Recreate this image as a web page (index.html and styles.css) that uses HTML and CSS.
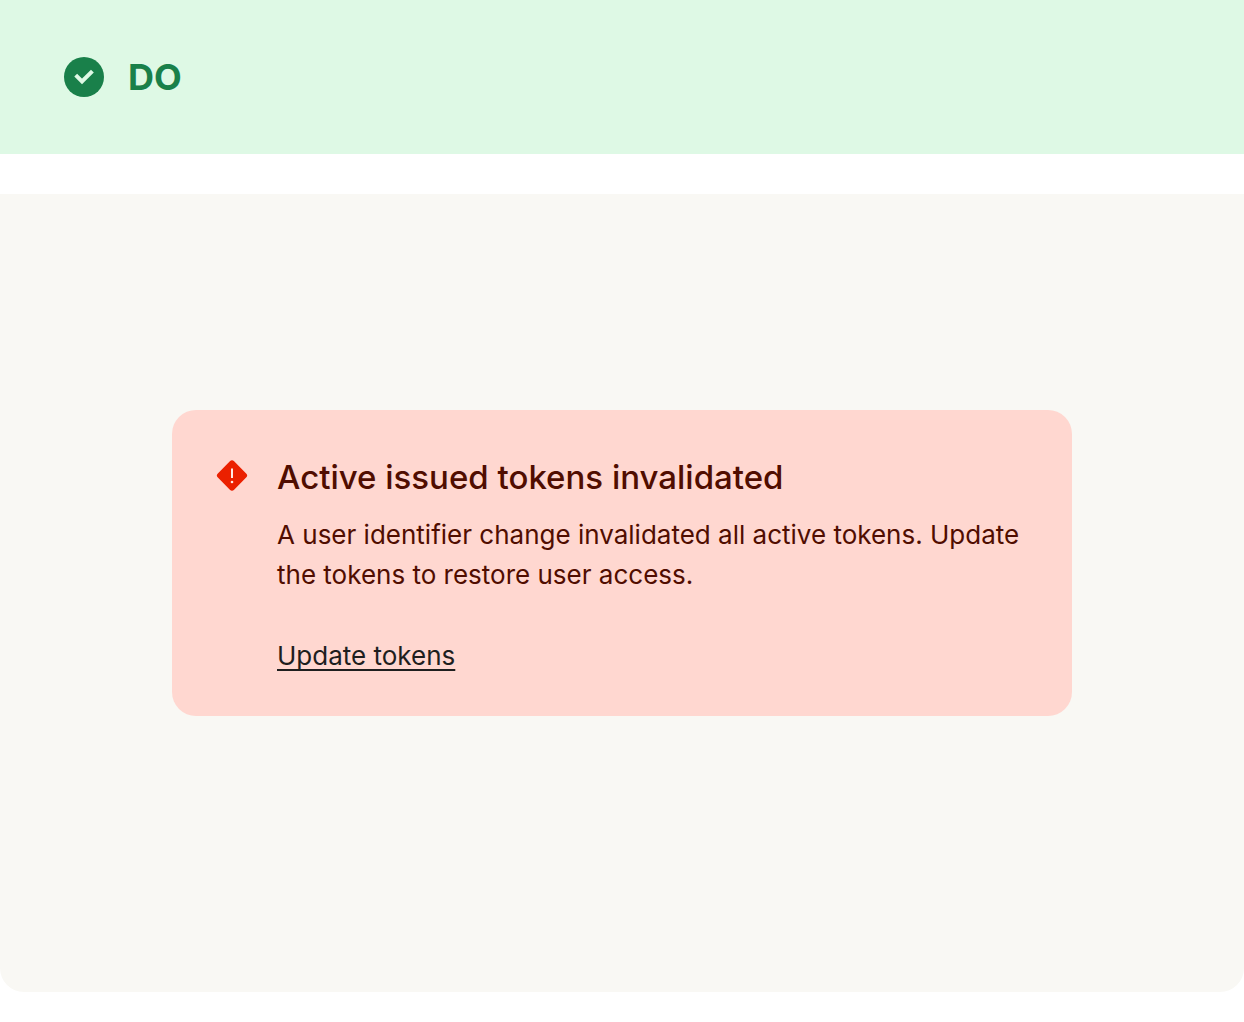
FILE: index.html
```html
<!DOCTYPE html>
<html lang="en">
<head>
  <meta charset="UTF-8">
  <title>Alert guidelines</title>
  <link rel="stylesheet" href="styles.css">
</head>
<body>
  <header class="banner">
    <svg class="banner-icon" viewBox="0 0 40 40" aria-hidden="true">
      <circle cx="20" cy="20" r="20" fill="#19804a"/>
      <path d="M11.700 18.200L18 24.500L28.400 14.100" fill="none" stroke="#def9e5" stroke-width="4"/>
    </svg>
    <h1 class="banner-title">DO</h1>
  </header>

  <main class="example">
    <section class="alert" role="alert">
      <svg class="alert-icon" viewBox="0 0 32 35" aria-hidden="true">
        <rect x="4.500" y="6" width="23" height="23" rx="3" transform="rotate(45 16 17.500)" fill="#eb2000"/>
        <path d="M16 10.500v9.500" stroke="#ffe9e4" stroke-width="2"/>
        <circle cx="16" cy="24" r="1.300" fill="#ffe9e4"/>
      </svg>
      <div class="alert-body">
        <h2 class="alert-title">Active issued tokens invalidated</h2>
        <p class="alert-text">A user identifier change invalidated all active tokens. Update the tokens to restore user access.</p>
        <a class="alert-link" href="#">Update tokens</a>
      </div>
    </section>
  </main>
</body>
</html>
```
FILE: styles.css
```css
body {
  margin: 0;
  background: #fff;
  font-family: Inter, "Liberation Sans", sans-serif;
}

.banner {
  display: flex;
  align-items: center;
  gap: 24px;
  padding: 55px 64px;
  background: #def9e5;
  color: #19804a;
}

.banner-icon {
  width: 40px;
  height: 40px;
}

.banner-title {
  margin: 0;
  font-size: 36px;
  line-height: 44px;
  font-weight: 700;
}

.example {
  margin-top: 40px;
  padding: 216px 172px 276px;
  background: #f9f8f4;
  border-radius: 0 0 24px 24px;
}

.alert {
  display: flex;
  gap: 29px;
  padding: 48px 44px 40px;
  background: #ffd7d0;
  border-radius: 24px;
  color: #500d00;
}

.alert-icon {
  flex: none;
  width: 32px;
  height: 35px;
}

.alert-title {
  margin: 0 0 19px;
  font-size: 33px;
  line-height: 38px;
  font-weight: 500;
}

.alert-text {
  margin: 0 0 41px;
  font-size: 26px;
  line-height: 40px;
}

.alert-link {
  font-size: 26px;
  line-height: 40px;
  color: #1e1e1e;
  text-decoration-thickness: 2px;
  text-underline-offset: 4px;
  text-decoration-skip-ink: none;
}
```
